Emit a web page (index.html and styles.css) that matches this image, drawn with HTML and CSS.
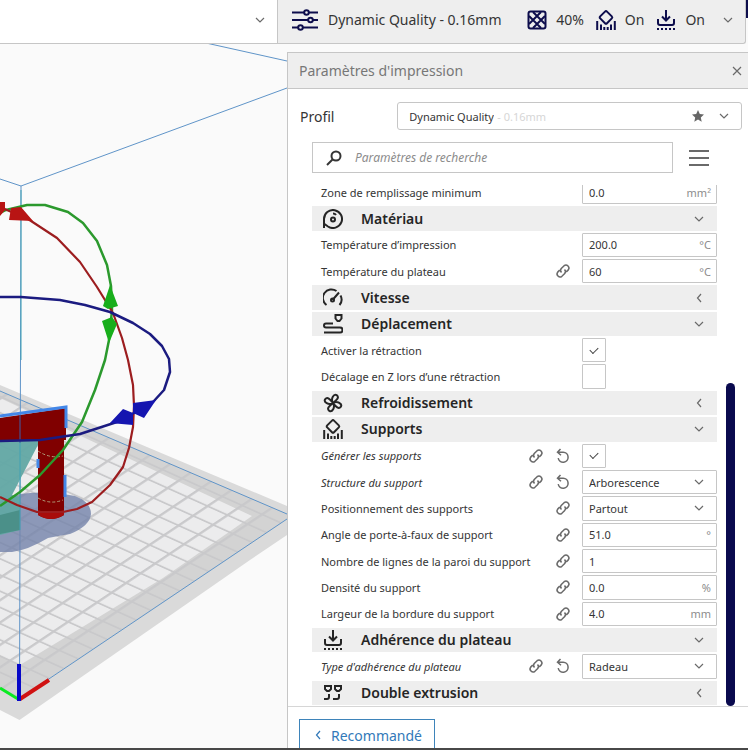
FILE: index.html
```html
<!DOCTYPE html>
<html lang="fr">

<head>
    <meta charset="utf-8">
    <meta name="viewport" content="width=device-width, initial-scale=1.0">
    <title>Paramètres d'impression</title>
    <link rel="stylesheet" href="styles.css">
</head>

<body>
    <!-- icon set -->
    <svg class="hidden" aria-hidden="true">
        <symbol id="chevron-down" viewBox="0 0 12 12"><path d="M2 4l4 4 4-4" /></symbol>
        <symbol id="chevron-left" viewBox="0 0 12 12"><path d="M8 2L4.500 6 8 10" /></symbol>
        <symbol id="link" viewBox="0 0 16 16">
            <path d="M6.500 9.500a3 3 0 0 1 0-4.200l2.600-2.600a3 3 0 0 1 4.200 4.200l-2 2M9.500 6.500a3 3 0 0 1 0 4.200l-2.600 2.600a3 3 0 0 1-4.200-4.200l2-2" />
        </symbol>
        <symbol id="reset" viewBox="0 0 16 16"><path d="M5.500 1L2.500 4.200l3.500 3M3 4.200h5.200a5 5 0 1 1-5 6" /></symbol>
        <symbol id="sliders" viewBox="0 0 26 22">
            <path d="M0 3.500h12M17 3.500h9M0 11h16M21 11h5M0 18.500h6M11 18.500h15" />
            <circle cx="14.500" cy="3.500" r="2.300" />
            <circle cx="18.500" cy="11" r="2.300" />
            <circle cx="8.500" cy="18.500" r="2.300" />
        </symbol>
        <symbol id="infill" viewBox="0 0 20 20">
            <rect x="1.500" y="1.500" width="17" height="17" rx="2" />
            <path d="M2 14L14 2M6 18L18 6M6 2l12 12M2 6l12 12" />
        </symbol>
        <symbol id="support" viewBox="0 0 20 20">
            <path d="M9 1.600q1-1 2 0l4.800 4.800q1 1 0 2L11 13.200q-1 1-2 0L4.200 8.400q-1-1 0-2zM1.200 11v9M5 14.500V20M8.300 17v3M11.700 17v3M15 14.500V20M18.800 11v9" />
        </symbol>
        <symbol id="adhesion" viewBox="0 0 20 20">
            <path d="M10 0v10M6 6.500l4 4 4-4M2 9v4q0 2 2 2h12q2 0 2-2V9" />
            <path d="M1 19h19" stroke-dasharray="2 2" />
        </symbol>
        <symbol id="material" viewBox="0 0 20 20">
            <path d="M1 19V10a9 9 0 1 1 4 7.500L1.500 15M10 4.500q2 0 3 1.500" />
            <circle cx="10" cy="10.500" r="2" />
        </symbol>
        <symbol id="speed" viewBox="0 0 20 20">
            <path d="M3.500 17A8.500 8.500 0 0 1 13.500 3M17.500 7.500a8.500 8.500 0 0 1-1 9.500M9.500 12L16 4.500" />
            <circle cx="9.500" cy="12" r="1.500" />
        </symbol>
        <symbol id="travel" viewBox="0 0 20 20">
            <path d="M12.500 1h6v3.500L16.500 7h-2l-2-2.500zM10 9.500H3a2 2 0 0 0 0 4h14a2.300 2.300 0 0 1 0 5H1" />
        </symbol>
        <symbol id="fan" viewBox="0 0 20 20">
            <path transform="rotate(38 10 10)" d="M10 10C5 8 5 2 8 1.500c4 0 3 4 2 8.500zM10 10c2-5 8-5 8.500-2 0 4-4 3-8.500 2zM10 10c5 2 5 8 2 8.500-4 0-3-4-2-8.500zM10 10c-2 5-8 5-8.500 2 0-4 4-3 8.500-2z" />
        </symbol>
        <symbol id="dual" viewBox="0 0 20 20">
            <path d="M2 3h6v3L6 8H4L2 6zM12 3h6v3l-2 2h-2l-2-2zM6 11v3q0 2-2 2H1M16 11v3q0 2-2 2h-4" />
        </symbol>
    </svg>

    <header class="topbar">
        <button class="topbar-left" aria-label="Matériau et buse">
            <svg class="icon chevron"><use href="#chevron-down" /></svg>
        </button>
        <button class="topbar-right">
            <svg class="icon sliders"><use href="#sliders" /></svg>
            <span class="quality">Dynamic Quality - 0.16mm</span>
            <span class="stat"><svg class="icon"><use href="#infill" /></svg>40%</span>
            <span class="stat"><svg class="icon"><use href="#support" /></svg>On</span>
            <span class="stat"><svg class="icon"><use href="#adhesion" /></svg>On</span>
            <svg class="icon chevron"><use href="#chevron-down" /></svg>
        </button>
        <span class="topbar-edge"></span>
    </header>

    <main>
        <!-- 3D view -->
        <svg class="scene" viewBox="0 44 287 704" preserveAspectRatio="xMaxYMid slice" role="img" aria-label="Vue 3D du modèle">
            <defs>
                <pattern id="grid" width="1" height="1" patternUnits="userSpaceOnUse" patternTransform="matrix(14.500 -9.700 20 9 19 698)">
                    <path d="M0 0.060h1M0.060 0v1" stroke="#c9c9cb" stroke-width="0.120" />
                </pattern>
            </defs>
            <path fill="#dadada" d="M0 385L287 506V535L250 560 19.500 720 0 710z" />
            <path fill="#d3d3d3" d="M0 391L287 514V519L19 698 0 688z" />
            <path fill="#ececed" d="M0 398L100 445 252 516 163 578 20 665 0 655z" />
            <path fill="url(#grid)" d="M0 391L287 514V519L19 698 0 688z" />
            <path class="edge" d="M0 391L287 514M287 519L19 699M0 179l21 7L287 88M206 43l81 18M21 186L19.500 698" />

            <path fill="#7483aa" fill-opacity="0.800" d="M0 502L20 494Q45 490 75 496Q91 502 91 514Q90 526 70 534Q58 536 48 538Q28 550 12 552H0z" />
            <path fill="#62a8a4" fill-opacity="0.950" d="M0 441H40L12 495 20 497V530L0 535z" />
            <path fill="#4b9089" d="M0 515L20 510V530L0 534z" />
            <path fill="#800000" d="M0 418L66 408V440H64V515Q51 523 38 515V440L0 442z" />
            <path fill="#a80c0c" d="M38 510Q51 515 64 510V515Q51 523 38 515z" />
            <path fill="none" stroke="#4387e8" stroke-width="3" d="M0 416L66 407V428M38 459v9M65 475v22" />
            <path fill="none" stroke="#b09a78" stroke-dasharray="3 2" d="M38 451Q50 459 63 456M38 498Q50 505 63 500" />
            <path stroke="#45a3b4" d="M21 190V360M20 443V530" />
            <path stroke="#3c5fa8" d="M20 415V443" />

            <path class="ring" stroke="#2b992d" d="M0 213L6 210 27 205H45L68 212 83 223 97 241 107 265 111 286 112 310 109 340 105 360 95 390 82 422 63 450 40 475 20 492 0 506" />
            <path class="ring thin" stroke="#9c1d1f" d="M0 207L28 219 57 238 80 262 97 287 113 313 122 338 128 360 133 385 134 406 133 427 129 448 123 467 110 485 92 502 77 509 63 512H37L17 505 0 497" />
            <path class="ring" stroke="#1b1b80" d="M0 297H21L60 300 85 305 110 312 133 323 150 334 162 346 169 359 170 372 164 390 153 402 120 421 80 434 40 440 0 441" />
            <path fill="#b81414" d="M0 202h5v8l-5 6zM9 220l2-12 10-1 12 14z" />
            <path fill="#18ae1b" d="M110 285l8 21-10 3-5-3zM102 321l10-4 5 7-8 19z" />
            <path fill="#1515b0" d="M133 403l23-3-12 18-11-5zM110 423l13-14 10 4v12z" />

            <path stroke="#0aeb22" stroke-width="3" d="M0 688l18 11" />
            <path stroke="#d01212" stroke-width="4" d="M20 699l29-19" />
            <path stroke="#0808c8" stroke-width="4" d="M19 664v37" />
        </svg>

        <section class="panel">
            <header class="panel-head">
                <h1>Paramètres d'impression</h1>
                <button class="close" aria-label="Fermer">
                    <svg class="icon" viewBox="0 0 10 10"><path d="M1 1l8 8M9 1L1 9" /></svg>
                </button>
            </header>

            <div class="profile">
                <label for="profil">Profil</label>
                <div class="profile-box">
                    <select id="profil"><option>Dynamic Quality</option></select>
                    <span class="layer">- 0.16mm</span>
                    <svg class="star" viewBox="0 0 12 12"><path d="M6 0l1.800 4 4.200.5-3.200 2.900.900 4.300L6 9.600l-3.700 2.100.900-4.300L0 4.500 4.200 4z" /></svg>
                    <svg class="icon chevron"><use href="#chevron-down" /></svg>
                </div>
            </div>

            <div class="search">
                <label class="search-box">
                    <svg class="icon" viewBox="0 0 16 16"><circle cx="10" cy="6" r="4.500" /><path d="M6.500 9.500L1 15" /></svg>
                    <input type="text" placeholder="Paramètres de recherche" aria-label="Paramètres de recherche">
                </label>
                <button class="menu" aria-label="Visibilité des paramètres">
                    <svg class="icon" viewBox="0 0 20 18"><path d="M0 2h20M0 9h20M0 16h20" /></svg>
                </button>
            </div>

            <div class="scroll">
                <div class="view">
                    <div class="list">
                        <div class="setting">
                            <label for="zone">Zone de remplissage minimum</label>
                            <div class="field"><input id="zone" type="text" value="0.0"><span>mm²</span></div>
                        </div>

                        <button class="category"><svg class="icon"><use href="#material" /></svg>Matériau<svg class="icon chevron"><use href="#chevron-down" /></svg></button>
                        <div class="setting">
                            <label for="temp">Température d’impression</label>
                            <div class="field"><input id="temp" type="text" value="200.0"><span>°C</span></div>
                        </div>
                        <div class="setting">
                            <label for="temp-plateau">Température du plateau</label>
                            <svg class="icon small"><use href="#link" /></svg>
                            <div class="field"><input id="temp-plateau" type="text" value="60"><span>°C</span></div>
                        </div>

                        <button class="category"><svg class="icon"><use href="#speed" /></svg>Vitesse<svg class="icon chevron"><use href="#chevron-left" /></svg></button>

                        <button class="category"><svg class="icon"><use href="#travel" /></svg>Déplacement<svg class="icon chevron"><use href="#chevron-down" /></svg></button>
                        <div class="setting">
                            <label for="retraction">Activer la rétraction</label>
                            <div class="tick"><input id="retraction" type="checkbox" checked></div>
                        </div>
                        <div class="setting">
                            <label for="decalage">Décalage en Z lors d’une rétraction</label>
                            <div class="tick"><input id="decalage" type="checkbox"></div>
                        </div>

                        <button class="category"><svg class="icon"><use href="#fan" /></svg>Refroidissement<svg class="icon chevron"><use href="#chevron-left" /></svg></button>

                        <button class="category"><svg class="icon"><use href="#support" /></svg>Supports<svg class="icon chevron"><use href="#chevron-down" /></svg></button>
                        <div class="setting changed">
                            <label for="generer">Générer les supports</label>
                            <svg class="icon small"><use href="#link" /></svg>
                            <button class="reset" aria-label="Réinitialiser"><svg class="icon small"><use href="#reset" /></svg></button>
                            <div class="tick"><input id="generer" type="checkbox" checked></div>
                        </div>
                        <div class="setting changed">
                            <label for="structure">Structure du support</label>
                            <svg class="icon small"><use href="#link" /></svg>
                            <button class="reset" aria-label="Réinitialiser"><svg class="icon small"><use href="#reset" /></svg></button>
                            <div class="field"><select id="structure"><option>Arborescence</option></select><svg class="icon chevron"><use href="#chevron-down" /></svg></div>
                        </div>
                        <div class="setting">
                            <label for="position">Positionnement des supports</label>
                            <svg class="icon small"><use href="#link" /></svg>
                            <div class="field"><select id="position"><option>Partout</option></select><svg class="icon chevron"><use href="#chevron-down" /></svg></div>
                        </div>
                        <div class="setting">
                            <label for="angle">Angle de porte-à-faux de support</label>
                            <svg class="icon small"><use href="#link" /></svg>
                            <div class="field"><input id="angle" type="text" value="51.0"><span>°</span></div>
                        </div>
                        <div class="setting">
                            <label for="lignes">Nombre de lignes de la paroi du support</label>
                            <svg class="icon small"><use href="#link" /></svg>
                            <div class="field"><input id="lignes" type="text" value="1"></div>
                        </div>
                        <div class="setting">
                            <label for="densite">Densité du support</label>
                            <svg class="icon small"><use href="#link" /></svg>
                            <div class="field"><input id="densite" type="text" value="0.0"><span>%</span></div>
                        </div>
                        <div class="setting">
                            <label for="bordure">Largeur de la bordure du support</label>
                            <svg class="icon small"><use href="#link" /></svg>
                            <div class="field"><input id="bordure" type="text" value="4.0"><span>mm</span></div>
                        </div>

                        <button class="category"><svg class="icon"><use href="#adhesion" /></svg>Adhérence du plateau<svg class="icon chevron"><use href="#chevron-down" /></svg></button>
                        <div class="setting changed">
                            <label for="adherence">Type d'adhérence du plateau</label>
                            <svg class="icon small"><use href="#link" /></svg>
                            <button class="reset" aria-label="Réinitialiser"><svg class="icon small"><use href="#reset" /></svg></button>
                            <div class="field"><select id="adherence"><option>Radeau</option></select><svg class="icon chevron"><use href="#chevron-down" /></svg></div>
                        </div>

                        <button class="category"><svg class="icon"><use href="#dual" /></svg>Double extrusion<svg class="icon chevron"><use href="#chevron-left" /></svg></button>
                    </div>
                </div>
                <div class="track"><div class="thumb"></div></div>
            </div>

            <footer class="panel-foot">
                <button class="recommended"><svg class="icon chevron"><use href="#chevron-left" /></svg>Recommandé</button>
            </footer>
        </section>
    </main>
</body>

</html>
```
FILE: styles.css
```css
/**** GENERAL ****/

* {
    box-sizing: border-box;
}

body {
    margin: 0;
    height: 100vh;
    display: flex;
    flex-direction: column;
    overflow: hidden;
    background-color: #fafafa;
    border-bottom: 2px solid #484848;
    font-family: "Noto Sans", sans-serif;
    font-size: 11px;
    color: #353535;
}

button,
input,
select {
    font: inherit;
    color: inherit;
    background: none;
    border: none;
    border-radius: 0;
    margin: 0;
    padding: 0;
    outline: none;
}

button {
    cursor: pointer;
}

select,
input[type="checkbox"] {
    appearance: none;
}

.hidden {
    position: absolute;
    width: 0;
    height: 0;
}

.icon {
    width: 20px;
    height: 20px;
    flex: none;
    fill: none;
    stroke: currentColor;
    stroke-width: 2;
}

.icon.small {
    width: 16px;
    height: 16px;
    stroke-width: 1.5;
    color: #6a6a6a;
}

.icon.chevron {
    width: 12px;
    height: 12px;
    stroke-width: 1.2;
    color: #6a6a6a;
}

/**** TOP BAR ****/

.topbar {
    display: grid;
    grid-template-columns: 277fr 469fr 2px;
    height: 44px;
    flex: none;
}

.topbar-left,
.topbar-right {
    display: flex;
    align-items: center;
    border-bottom: 1px solid #c6c6c6;
    padding-bottom: 4px;
}

.topbar-left {
    justify-content: flex-end;
    background-color: #fff;
    padding-right: 11px;
}

.topbar-right {
    background-color: #eee;
    border-left: 1px solid #c6c6c6;
    border-right: 1px solid #c6c6c6;
    border-bottom-right-radius: 3px;
    padding-left: 14px;
    padding-right: 11px;
    font-size: 14px;
}

.topbar-right .icon {
    color: #0d0d4c;
}

.topbar-right .icon.chevron {
    color: #6a6a6a;
}

.icon.sliders {
    width: 26px;
    height: 22px;
}

.quality {
    margin-left: 10px;
    margin-right: auto;
}

.stat {
    display: flex;
    align-items: center;
    gap: 9px;
    margin-right: 12px;
}

.stat:last-of-type {
    margin-right: 17px;
}

.topbar-edge {
    height: 18px;
    background-color: #0d0d4c;
}

/**** 3D VIEW ****/

main {
    flex: 1;
    min-height: 0;
    display: grid;
    grid-template-columns: 287fr 461fr;
    grid-template-rows: minmax(0, 1fr);
}

.scene {
    width: 100%;
    height: 100%;
    display: block;
}

.edge {
    fill: none;
    stroke: #5f94c8;
}

.ring {
    fill: none;
    stroke-width: 2.5;
    stroke-linejoin: round;
}

.ring.thin {
    stroke-width: 2.2;
}

/**** PANEL ****/

.panel {
    display: flex;
    flex-direction: column;
    min-height: 0;
    overflow: hidden;
    margin-top: 8px;
    background-color: #fff;
    border-top: 1px solid #c6c6c6;
    border-left: 1px solid #c6c6c6;
}

.panel-head {
    flex: none;
    height: 36px;
    display: flex;
    align-items: center;
    justify-content: space-between;
    padding: 0 6px 0 11px;
    background-color: #eee;
    border-bottom: 1px solid #c6c6c6;
}

h1 {
    margin: 0;
    font-size: 14px;
    font-weight: 400;
    color: #777;
}

.close {
    display: flex;
    color: #6a6a6a;
}

.close .icon {
    width: 10px;
    height: 10px;
    stroke-width: 1.2;
}

.profile {
    flex: none;
    display: flex;
    align-items: center;
    justify-content: space-between;
    padding: 13px 6px 12px 12px;
    font-size: 14px;
}

.profile-box {
    display: flex;
    align-items: center;
    width: 78%;
    height: 28px;
    padding: 0 11px;
    border: 1px solid #c6c6c6;
    border-radius: 3px;
    font-size: 11px;
}

.layer {
    flex: 1;
    margin-left: 3px;
    color: #d6d6d6;
}

.star {
    width: 12px;
    height: 12px;
    margin-right: 14px;
    fill: #666;
}

.search {
    flex: none;
    display: flex;
    align-items: center;
    gap: 16px;
    padding: 0 39px 12px 24px;
}

.search-box {
    flex: 1;
    display: flex;
    align-items: center;
    gap: 13px;
    height: 31px;
    padding: 0 13px;
    border: 1px solid #c6c6c6;
}

.search-box .icon {
    width: 16px;
    height: 16px;
}

.search-box input {
    flex: 1;
    min-width: 0;
    font-size: 12px;
    font-style: italic;
}

.search-box input::placeholder {
    color: #8c8c8c;
}

.menu {
    display: flex;
}

.menu .icon {
    height: 18px;
    color: #6a6a6a;
}

/**** SETTINGS ****/

.scroll {
    flex: 1;
    min-height: 0;
    display: flex;
    gap: 9px;
    padding: 0 13px 0 24px;
}

.view {
    flex: 1;
    display: flex;
    flex-direction: column;
    justify-content: flex-end;
    overflow: hidden;
    padding-bottom: 1px;
}

/* scrolled to the end, the first row is partly cut */
.list {
    flex: none;
    height: calc(100% + 5px);
    display: grid;
    grid-auto-rows: 1fr;
    gap: 2px;
}

.setting {
    display: flex;
    align-items: center;
    min-height: 0;
}

.setting label {
    flex: 1;
    padding-left: 9px;
}

.setting > .icon,
.reset {
    margin-right: 11px;
}

.reset {
    display: flex;
}

.changed label {
    font-style: italic;
}

.field,
.tick {
    width: calc(100% / 3);
    height: 100%;
}

.field {
    display: flex;
    align-items: center;
    padding: 0 5px 0 6px;
    border: 1px solid #c6c6c6;
    border-radius: 1px;
}

.field input,
.field select {
    flex: 1;
    min-width: 0;
}

.field span {
    color: #8c8c8c;
}

.field .chevron {
    margin-right: 6px;
}

.tick input {
    display: grid;
    place-items: center;
    height: 100%;
    aspect-ratio: 1;
    border: 1px solid #c6c6c6;
    border-radius: 1px;
}

.tick input:checked::before {
    content: "";
    width: 7px;
    height: 4px;
    margin-bottom: 2px;
    border-left: 1px solid #444;
    border-bottom: 1px solid #444;
    transform: rotate(-45deg);
}

.category {
    display: flex;
    align-items: center;
    min-height: 0;
    padding: 0 12px 0 11px;
    background-color: #eee;
    font-size: 14px;
    font-weight: 600;
    line-height: 20px;
    color: #252525;
}

.category .icon:first-child {
    margin-right: 18px;
}

.category .chevron {
    margin-left: auto;
}

.track {
    width: 9px;
    display: flex;
    align-items: flex-end;
}

.thumb {
    width: 100%;
    height: 62%;
    border-radius: 5px;
    background-color: #0a0a4e;
}

/**** FOOTER ****/

.panel-foot {
    flex: none;
    height: 42px;
    padding: 12px 11px 0;
    border-top: 1px solid #d6d6d6;
}

.recommended {
    display: flex;
    align-items: center;
    gap: 7px;
    height: 32px;
    padding: 0 12px;
    border: 1px solid #3e84ba;
    font-size: 14px;
    color: #3279b9;
}

.recommended .icon.chevron {
    color: #3279b9;
}
```
